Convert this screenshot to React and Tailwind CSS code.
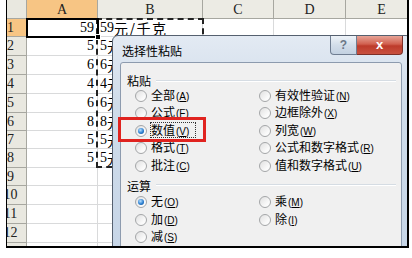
import React from "react";

const rowH = [18, 19, 19, 19, 19, 18, 18, 19, 18, 19, 19, 19, 6];
const aVals = ["59", "5", "6", "4", "6", "8", "5", "5"];
const bVals = ["59", "5", "6", "4", "6", "8", "5", "5"];
const cols = [
  { k: "A", w: "w-[71px]" },
  { k: "B", w: "w-[105px]" },
  { k: "C", w: "w-[71px]" },
  { k: "D", w: "w-[72px]" },
  { k: "E", w: "w-[72px]" },
];

const serif = { fontFamily: '"Liberation Serif", "Noto Sans CJK SC", serif' };
const cjk = { fontFamily: '"Noto Sans CJK SC", "Liberation Sans", sans-serif' };

function Radio({ on }) {
  return (
    <div className="w-[12px] h-[12px] shrink-0 rounded-full border border-[#a4a6a8] bg-[linear-gradient(135deg,#e0e0e0,#fafafa_70%)] flex items-center justify-center">
      {on && (
        <div className="w-[6px] h-[6px] rounded-full bg-[radial-gradient(circle_at_40%_35%,#b9e1ff,#2a7ed0_55%,#0b4585)]" />
      )}
    </div>
  );
}

function Opt({ label, k, on }) {
  return (
    <div className="flex items-center h-[17.5px] gap-[4px]">
      <Radio on={on} />
      <span className="text-[12px] leading-[14px] text-black whitespace-nowrap" style={cjk}>
        {label}
        <span className="text-[10px] ml-[1px]" style={{ fontFamily: '"Liberation Sans", sans-serif' }}>
          (<span className="underline">{k}</span>)
        </span>
      </span>
    </div>
  );
}

function Group({ title }) {
  return (
    <div className="flex items-center h-[13px]">
      <span className="text-[12px] leading-[13px] text-black" style={cjk}>{title}</span>
      <div className="flex-1 ml-[5px] mr-[5px] border-t border-[#d5dce3] border-b border-b-white h-[2px]" />
    </div>
  );
}

export default function App() {
  return (
    <div className="w-[412px] h-[258px] bg-white overflow-hidden">
      <div className="relative ml-[6px] w-[403px] h-[248px] border-l border-r-2 border-b-2 border-black overflow-hidden bg-white">
        {/* header row */}
        <div className="flex h-[19px]">
          <div className="w-[20px] shrink-0 bg-[#e9e8e0] border-r border-b border-[#a7a7a0]" />
          {cols.map((c) => (
            <div
              key={c.k}
              className={`${c.w} shrink-0 border-r border-b border-[#a7a7a0] flex items-center justify-center text-[14px] text-[#222] ${c.k === "A" ? "bg-[#f7c584]" : "bg-[#ecebe4]"}`}
              style={serif}
            >
              {c.k}
            </div>
          ))}
        </div>
        {rowH.map((h, i) => (
          <div key={i} className="flex" style={{ height: h }}>
            <div
              className={`w-[20px] shrink-0 overflow-hidden border-r border-b border-[#a7a7a0] flex items-center ${i === 0 ? "bg-[#f7c584]" : "bg-[#e9e8e0]"}`}
            >
              <div className="w-[21px] -ml-[7px] shrink-0 text-center text-[14px] leading-[16px] text-[#222]" style={serif}>
                {i < 12 ? i + 1 : ""}
              </div>
            </div>
            <div className="w-[71px] shrink-0 border-r border-b border-[#d9dadb] flex items-center justify-end pr-[3px] text-[14px] leading-[16px] text-black" style={serif}>
              {aVals[i] || ""}
            </div>
            <div className="w-[105px] shrink-0 border-r border-b border-[#d9dadb] flex items-center pl-[2px] text-[14px] leading-[16px] text-black whitespace-nowrap overflow-hidden" style={serif}>
              {bVals[i] ? (
                <>
                  {bVals[i]}
                  <span className="tracking-[1.5px]" style={cjk}>元/千克</span>
                </>
              ) : null}
            </div>
            <div className="w-[71px] shrink-0 border-r border-b border-[#d9dadb]" />
            <div className="w-[72px] shrink-0 border-r border-b border-[#d9dadb]" />
            <div className="w-[72px] shrink-0 border-r border-b border-[#d9dadb]" />
          </div>
        ))}

        {/* copy marquee */}
        <div className="absolute left-[89px] top-[18px] w-[108px] h-[150px] border-2 border-dashed border-[#222]" />
        {/* A1 selection */}
        <div className="absolute left-[19px] top-[18px] w-[73px] h-[20px] border-2 border-black" />
        <div className="absolute left-[88px] top-[34px] w-[6px] h-[6px] bg-black border border-white" />

        {/* dialog */}
        <div className="absolute left-[105px] top-[35px] w-[300px] h-[230px] rounded-t-[6px] border border-[#55606f] bg-[linear-gradient(180deg,#e3eaf3,#cfdcea_30%,#c6d5e7)] flex flex-col">
          <div className="relative h-[26px] shrink-0 pl-[9px] pt-[8px]">
            <span className="text-[12px] leading-[14px] text-black block" style={cjk}>选择性粘贴</span>
            <div className="absolute top-0 right-[8px] flex">
              <div className="w-[27px] h-[19px] rounded-bl-[4px] border border-t-0 border-[#6f7d91] bg-[linear-gradient(180deg,#eef3f8,#d3deea_50%,#c3d1e1)] flex items-center justify-center text-[12px] font-bold text-[#6c7888]" style={{ fontFamily: '"Liberation Sans", sans-serif' }}>
                ?
              </div>
              <div className="w-[46px] h-[19px] rounded-br-[4px] border border-l-0 border-t-0 border-[#7d2f27] bg-[linear-gradient(180deg,#e7a497,#d1604f_45%,#bd3b2b_55%,#c8513f)] flex items-center justify-center text-[13px] font-bold text-white" style={{ fontFamily: '"Liberation Sans", sans-serif' }}>
                x
              </div>
            </div>
          </div>
          <div className="flex-1 ml-[7px] mr-[9px] rounded-t-[3px] border border-[#8d9bae] bg-[#f0f0f0] pl-[6px] pt-[11px]">
            <Group title="粘贴" />
            <div className="flex">
              <div className="w-[132px] pl-[8px]">
                <Opt label="全部" k="A" />
                <Opt label="公式" k="F" />
                <Opt label="数值" k="V" on />
                <Opt label="格式" k="T" />
                <Opt label="批注" k="C" />
              </div>
              <div>
                <Opt label="有效性验证" k="N" />
                <Opt label="边框除外" k="X" />
                <Opt label="列宽" k="W" />
                <Opt label="公式和数字格式" k="R" />
                <Opt label="值和数字格式" k="U" />
              </div>
            </div>
            <div className="h-[4px]" />
            <Group title="运算" />
            <div className="flex mt-[2px]">
              <div className="w-[132px] pl-[8px]">
                <Opt label="无" k="O" on />
                <Opt label="加" k="D" />
                <Opt label="减" k="S" />
              </div>
              <div>
                <Opt label="乘" k="M" />
                <Opt label="除" k="I" />
              </div>
            </div>
          </div>
        </div>

        {/* focus rect and red highlight */}
        <div className="absolute left-[143px] top-[122px] w-[46px] h-[16px] border border-dotted border-[#333]" />
        <div className="absolute left-[111px] top-[117px] w-[88px] h-[25px] border-[3px] border-[#e0231f]" />
      </div>
    </div>
  );
}
